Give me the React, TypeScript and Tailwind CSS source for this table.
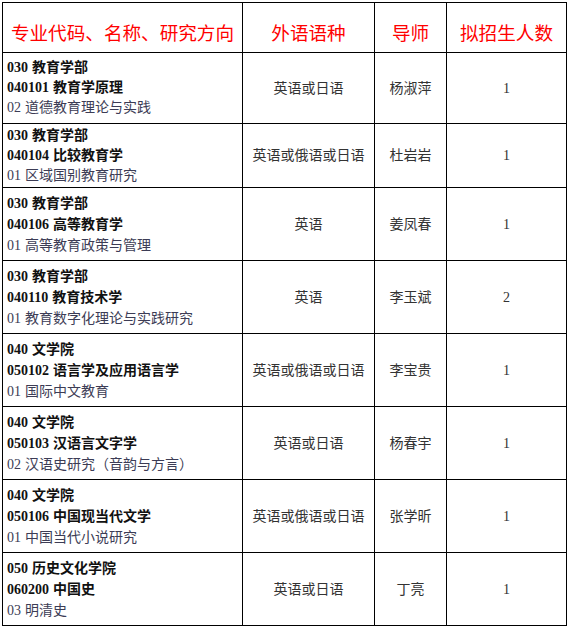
type Row = {
  dept: string;
  major: string;
  direction: string;
  lang: string;
  tutor: string;
  count: string;
  h: string;
  lead: string;
};

const rows: Row[] = [
  { dept: '030 教育学部', major: '040101 教育学原理', direction: '02 道德教育理论与实践', lang: '英语或日语', tutor: '杨淑萍', count: '1', h: 'h-[71px]', lead: 'leading-[20px]' },
  { dept: '030 教育学部', major: '040104 比较教育学', direction: '01 区域国别教育研究', lang: '英语或俄语或日语', tutor: '杜岩岩', count: '1', h: 'h-[64px]', lead: 'leading-[20px]' },
  { dept: '030 教育学部', major: '040106 高等教育学', direction: '01 高等教育政策与管理', lang: '英语', tutor: '姜凤春', count: '1', h: 'h-[73px]', lead: 'leading-[21px]' },
  { dept: '030 教育学部', major: '040110 教育技术学', direction: '01 教育数字化理论与实践研究', lang: '英语', tutor: '李玉斌', count: '2', h: 'h-[73px]', lead: 'leading-[21px]' },
  { dept: '040 文学院', major: '050102 语言学及应用语言学', direction: '01 国际中文教育', lang: '英语或俄语或日语', tutor: '李宝贵', count: '1', h: 'h-[73px]', lead: 'leading-[21px]' },
  { dept: '040 文学院', major: '050103 汉语言文字学', direction: '02 汉语史研究（音韵与方言）', lang: '英语或日语', tutor: '杨春宇', count: '1', h: 'h-[73px]', lead: 'leading-[21px]' },
  { dept: '040 文学院', major: '050106 中国现当代文学', direction: '01 中国当代小说研究', lang: '英语或俄语或日语', tutor: '张学昕', count: '1', h: 'h-[73px]', lead: 'leading-[21px]' },
  { dept: '050 历史文化学院', major: '060200 中国史', direction: '03 明清史', lang: '英语或日语', tutor: '丁亮', count: '1', h: 'h-[73px]', lead: 'leading-[21px]' },
];

const cell = 'border-[1.5px] border-black align-middle';
// digits in Times-like serif, CJK falls through to Noto
const serif = "font-['Liberation_Serif','Noto_Sans_CJK_SC',serif]";

/** One numbered line: serif digits, CJK name after a space */
function CodeLine({ text, className }: { text: string; className: string }) {
  const i = text.indexOf(' ');
  return (
    <div className={`${serif} ${className}`}>
      {text.slice(0, i)}
      <span className="ml-[4px]">{text.slice(i + 1)}</span>
    </div>
  );
}

export default function App() {
  return (
    <div className="w-[568px] h-[627px] bg-white pl-[2px] pt-[2px]">
      <table className="table-fixed border-collapse w-[564px]">
        <colgroup>
          <col className="w-[240px]" />
          <col className="w-[132px]" />
          <col className="w-[72px]" />
          <col className="w-[120px]" />
        </colgroup>
        <thead>
          <tr className="h-[50px]">
            {['专业代码、名称、研究方向', '外语语种', '导师', '拟招生人数'].map((t) => (
              <th
                key={t}
                className={`${cell} pt-[9px] text-center font-normal text-[18.6px] leading-[24px] text-[#ff0000] font-['Noto_Sans_CJK_SC',sans-serif]`}
              >
                {t}
              </th>
            ))}
          </tr>
        </thead>
        <tbody className="text-[14px]">
          {rows.map((r, i) => (
            <tr key={i} className={r.h}>
              <td className={`${cell} pl-[4px] ${r.lead}`}>
                <CodeLine text={r.dept} className="font-bold text-[#111]" />
                <CodeLine text={r.major} className="font-bold text-[#111]" />
                <CodeLine text={r.direction} className="text-[#3c3c55]" />
              </td>
              <td className={`${cell} ${serif} text-center text-[#333]`}>{r.lang}</td>
              <td className={`${cell} ${serif} text-center text-[#333]`}>{r.tutor}</td>
              <td className={`${cell} ${serif} text-center text-[#333]`}>{r.count}</td>
            </tr>
          ))}
        </tbody>
      </table>
    </div>
  );
}
